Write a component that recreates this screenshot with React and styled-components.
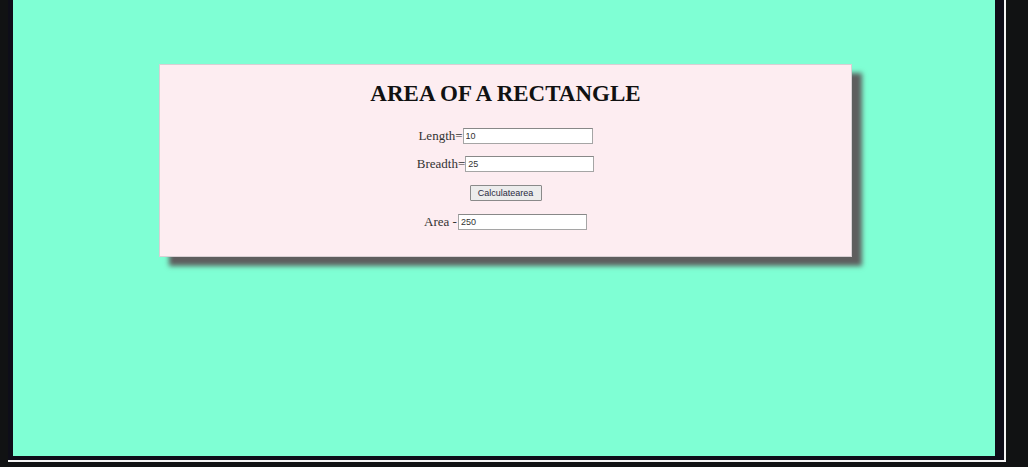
import React from 'react';
import styled, { createGlobalStyle } from "styled-components";

const GlobalStyle = createGlobalStyle`
html, body {
    margin: 0;
    padding: 0;
    background: #111213;
}
`;

const Screen = styled.div`
width: 1028px;
height: 467px;
background: #111213;
padding-left: 8px;
box-sizing: border-box;
overflow: hidden;
`;

const Frame = styled.div`
width: 998px;
height: 462px;
box-sizing: border-box;
background: #0e0d18;
border-right: 2px solid #f4f4f4;
border-bottom: 2px solid #f4f4f4;
padding: 0 9px 4px 5px;
display: flex;
`;

const Page = styled.div`
flex: 1;
background: #7fffd4;
padding: 64px 0 0 146px;
box-sizing: border-box;
`;

const Card = styled.section`
width: 693px;
height: 193px;
box-sizing: border-box;
background: #fdedf1;
box-shadow: 10px 9px 5px #5e5e5e;
border: 1px solid #d8d0d4;
padding-top: 15px;
display: flex;
flex-direction: column;
align-items: center;
font-family: "Liberation Serif", serif;
`;

const Title = styled.h1`
margin: 0 0 21px;
font-size: 23px;
font-weight: bold;
color: #111;
line-height: 27px;
`;

const Row = styled.div`
display: flex;
align-items: center;
justify-content: center;
height: 16px;
margin-bottom: ${props => props.gap}px;
`;

const Label = styled.label`
font-size: 13px;
color: #333;
margin-right: ${props => props.space || 0}px;
`;

const Field = styled.input`
width: ${props => props.width || 129}px;
height: 16px;
box-sizing: border-box;
border: 1px solid #a5a5a5;
border-top-color: #888;
background: #fff;
padding: 0 2px;
font-family: "Liberation Sans", sans-serif;
font-size: 9px;
color: #333;
outline: none;
`;

const Button = styled.button`
width: 72px;
height: 16px;
padding: 0;
border: 1px solid #8a8a8a;
border-radius: 1px;
background: #ececec;
font-family: "Liberation Sans", sans-serif;
font-size: 9px;
color: #2a2a40;
`;

function App() {
    return (
        <Screen>
            <GlobalStyle />
            <Frame>
                <Page>
                    <Card>
                        <Title>AREA OF A RECTANGLE</Title>
                        <Row gap={12}>
                            <Label>Length=</Label>
                            <Field defaultValue="10" width={130} />
                        </Row>
                        <Row gap={13}>
                            <Label>Breadth=</Label>
                            <Field defaultValue="25" width={129} />
                        </Row>
                        <Row gap={13}>
                            <Button>Calculatearea</Button>
                        </Row>
                        <Row gap={0}>
                            <Label space={1}>Area -</Label>
                            <Field defaultValue="250" width={129} />
                        </Row>
                    </Card>
                </Page>
            </Frame>
        </Screen>
    );
}

export default App;
